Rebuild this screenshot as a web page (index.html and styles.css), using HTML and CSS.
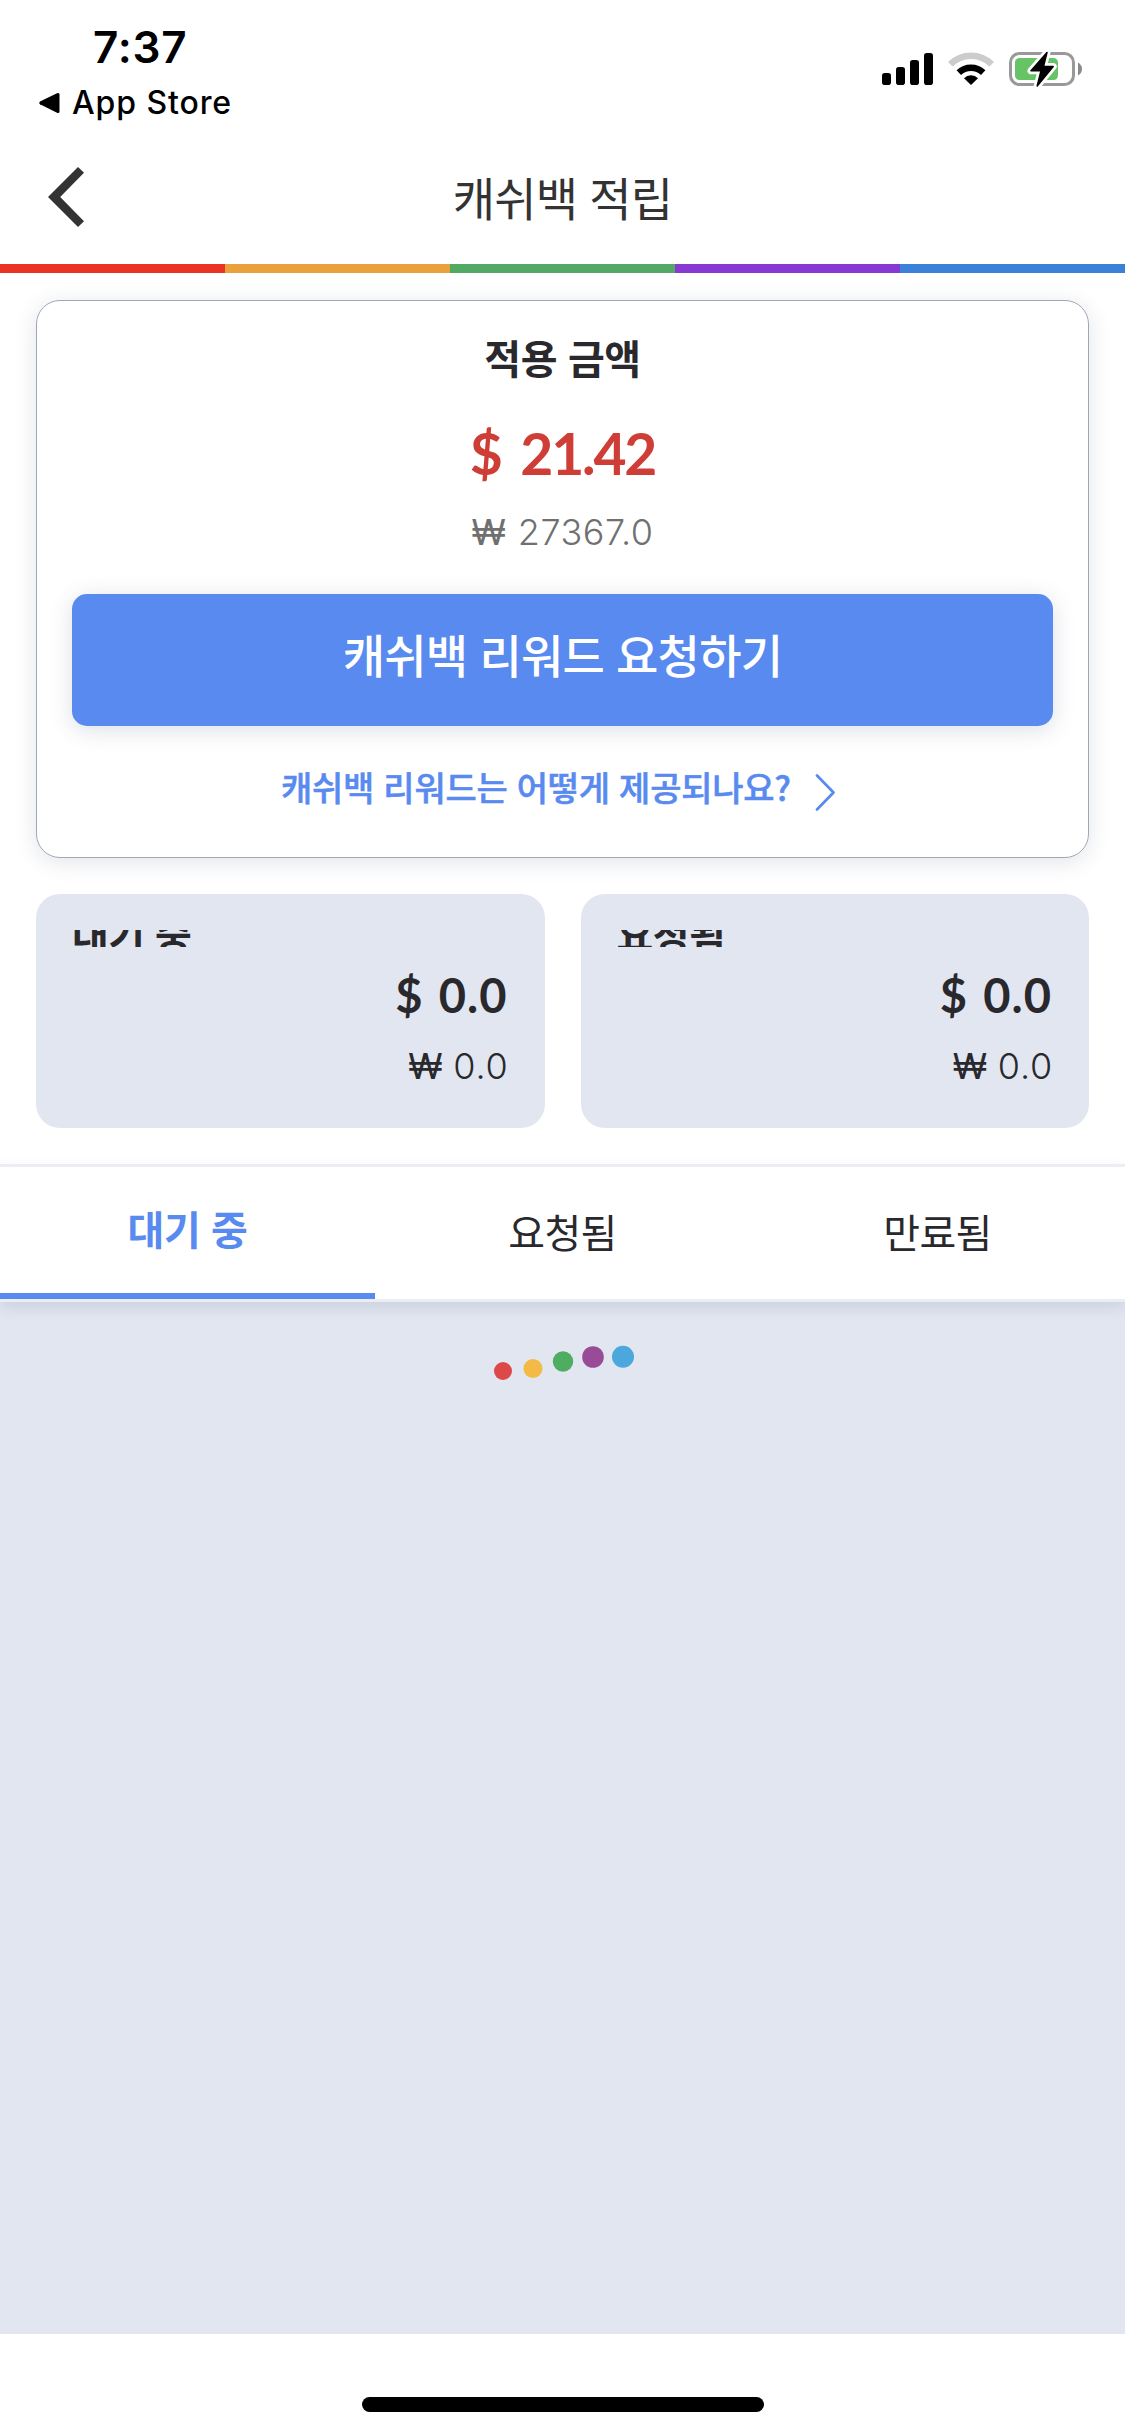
FILE: index.html
```
<!DOCTYPE html>
<html lang="ko">
<head>
<meta charset="utf-8">
<title>캐쉬백 적립</title>
<link rel="stylesheet" href="styles.css">
</head>
<body>
<div class="app">
  <div class="status">
    <div class="status-left">
      <div class="time">7:37</div>
      <div class="return">
        <svg width="21" height="22" viewBox="0 0 21 22"><path d="M1 9.6Q-.4 11 1 12.200L18 20.800Q20.500 21.600 20.500 19.500V2.500Q20.500.300 18 1.200Z"/></svg>
        <span>App Store</span>
      </div>
    </div>
    <svg class="status-icons" width="203" height="40" viewBox="880 50 203 40">
      <rect x="882" y="73" width="9" height="12" rx="2.800"/>
      <rect x="896" y="67" width="9" height="18" rx="2.800"/>
      <rect x="910" y="60" width="9" height="25" rx="2.800"/>
      <rect x="924" y="53" width="9" height="32" rx="2.800"/>
      <path d="M950.300 64.200A29.300 29.300 0 0 1 991.700 64.200" fill="none" stroke="#ccc" stroke-width="6.500"/>
      <path d="M958.800 72.700A17.800 17.800 0 0 1 983.200 72.700" fill="none" stroke="#000" stroke-width="6.500"/>
      <path d="M971 85L964 78.200A10 10 0 0 1 978 78.200Z"/>
      <rect x="1010.500" y="53.500" width="63" height="31" rx="9" fill="none" stroke="#999" stroke-width="3"/>
      <rect x="1015" y="58" width="43" height="22" rx="4.500" fill="#66c466"/>
      <path d="M1078 62.500Q1082 65 1082 69T1078 75.500Z" fill="#8a8a8a"/>
      <path class="bolt" d="M1047 52.500L1031 70.800H1041L1037.200 86L1053.200 66.500H1043.500Z"/>
      <path d="M1047 52.500L1031 70.800H1041L1037.200 86L1053.200 66.500H1043.500Z" stroke="#000" stroke-width="1.500" stroke-linejoin="round"/>
    </svg>
  </div>
  <header class="nav">
    <svg class="back" width="37" height="62" viewBox="0 0 37 62"><path d="M0 31L30 1L36 6.800L12.200 31L36 55.200L30 61Z" fill="#333"/></svg>
    <h1>캐쉬백 적립</h1>
  </header>
  <div class="strip"><i class="red"></i><i class="orange"></i><i class="green"></i><i class="purple"></i><i class="blue"></i></div>

  <section class="card">
    <h2>적용 금액</h2>
    <div class="amount">$ 21.42</div>
    <div class="won"><b>₩</b> 27367.0</div>
    <button class="request">캐쉬백 리워드 요청하기</button>
    <a class="help">
      <span>캐쉬백 리워드는 어떻게 제공되나요?</span>
      <svg width="21" height="37" viewBox="0 0 21 37"><path d="M2 1.500L18.500 18.500L2 35.500" fill="none" stroke="#588af0" stroke-width="2.700" stroke-linecap="round" stroke-linejoin="round"/></svg>
    </a>
  </section>

  <section class="totals">
    <div class="total"><div class="label">대기 중</div><div class="usd">$ 0.0</div><div class="krw"><b>₩</b> 0.0</div></div>
    <div class="total"><div class="label">요청됨</div><div class="usd">$ 0.0</div><div class="krw"><b>₩</b> 0.0</div></div>
  </section>

  <nav class="tabs">
    <div class="tab active">대기 중</div>
    <div class="tab">요청됨</div>
    <div class="tab">만료됨</div>
  </nav>

  <main class="list">
    <svg class="loader" width="142" height="40" viewBox="492 1342 142 40">
      <circle cx="503" cy="1371" r="9" fill="#dd4848"/>
      <circle cx="533" cy="1368.500" r="9.500" fill="#f3bb45"/>
      <circle cx="563" cy="1361.500" r="10.200" fill="#4fad62"/>
      <circle cx="593" cy="1357" r="10.800" fill="#984c97"/>
      <circle cx="623" cy="1356.700" r="11" fill="#4ca7dc"/>
    </svg>
  </main>
  <footer class="home"><div class="home-bar"></div></footer>
</div>
</body>
</html>
```
FILE: styles.css
```
* { box-sizing: border-box; }
body { margin: 0; background: #fff; font-family: "Noto Sans CJK KR", sans-serif; color: #29292d; }
h1, h2 { margin: 0; }
svg { display: block; flex: none; }
.app { width: 1125px; height: 2436px; display: flex; flex-direction: column; overflow: hidden; background: #fff; }
.app > * { flex: none; }

.status { height: 132px; display: flex; justify-content: space-between; padding: 23px 42px 0 39px; color: #000; font-family: Inter, sans-serif; }
.time { font-size: 44px; font-weight: 600; line-height: 48px; letter-spacing: .8px; padding-left: 54px; }
.return { display: flex; align-items: center; gap: 12px; margin-top: 12px; font-size: 32px; font-weight: 500; line-height: 40px; letter-spacing: .9px; }
.status-icons { margin-top: 27px; }
.bolt { fill: #fff; stroke: #fff; stroke-width: 7; stroke-linejoin: round; }

.nav { height: 128px; display: grid; grid-template-columns: 100px 1fr 100px; align-items: center; padding: 0 48px; margin-bottom: 4px; }
.back { margin-top: 2px; }
.nav h1 { font-size: 46px; font-weight: 400; line-height: 60px; letter-spacing: -.8px; text-align: center; color: #333; }
.strip { height: 9px; display: grid; grid-template-columns: repeat(5, 1fr); }
.red { background: #ea3323; }
.orange { background: #eaa13b; }
.green { background: #52a963; }
.purple { background: #8839d1; }
.blue { background: #3c81d8; }

.card { height: 558px; margin: 27px 36px 0; padding: 31px 35px 0; border: 1px solid #a0a6b5; border-radius: 24px; text-align: center; box-shadow: 0 4px 22px rgba(50, 65, 100, .14); }
.card h2 { font-size: 40px; font-weight: 700; line-height: 50px; letter-spacing: -.4px; }
.amount { margin-top: 41px; font: 700 57px/60px Lato, sans-serif; letter-spacing: -2.2px; word-spacing: 8px; color: #cf3e36; }
.won { margin-top: 29px; font: 300 36px/40px Inter, sans-serif; letter-spacing: .5px; word-spacing: 1px; color: #707070; }
.won b, .krw b { font-weight: 400; }
.request { display: flex; align-items: center; justify-content: center; width: 100%; height: 132px; margin-top: 42px; padding: 0 0 14px; border: 0; border-radius: 15px; background: #588af0; color: #fff; font: 500 46px/60px "Noto Sans CJK KR", sans-serif; letter-spacing: -.8px; box-shadow: 0 4px 22px rgba(50, 65, 100, .17); }
.help { display: flex; align-items: center; gap: 24px; margin-top: 36px; padding-left: 209px; font-size: 34px; font-weight: 500; line-height: 50px; letter-spacing: -.25px; color: #588af0; white-space: nowrap; -webkit-text-stroke: .5px #588af0; }
.help svg { margin-top: 11px; }

.totals { display: grid; grid-template-columns: 1fr 1fr; gap: 36px; margin: 36px 36px 0; }
.total { height: 234px; padding: 36px 36px 0; border-radius: 24px; background: #e2e6f1; text-align: right; }
.label { height: 17px; overflow: hidden; font-size: 40px; font-weight: 700; line-height: 7px; letter-spacing: -.6px; text-align: left; }
.usd { margin-top: 20px; padding-right: 1px; font: 700 47px/56px Lato, sans-serif; letter-spacing: 1px; word-spacing: 3px; }
.krw { margin-top: 23px; font: 300 36px/40px Inter, sans-serif; letter-spacing: .8px; word-spacing: -1px; }

.tabs { height: 138px; display: grid; grid-template-columns: repeat(3, 1fr); margin-top: 36px; border: solid #ebedf3; border-width: 3px 0; background: #fff; box-shadow: 0 6px 14px rgba(50, 65, 100, .12); z-index: 1; }
.tab { display: flex; align-items: center; justify-content: center; padding-bottom: 5px; font-size: 40px; line-height: 50px; letter-spacing: -.7px; }
.tab.active { padding-bottom: 5px; border-bottom: 6px solid #588af0; color: #588af0; font-weight: 700; letter-spacing: -.4px; }

.list { flex: 1; display: flex; justify-content: center; align-items: flex-start; padding-top: 40px; background: #e2e6f1; }
.home { height: 102px; display: flex; justify-content: center; padding-top: 63px; }
.home-bar { width: 402px; height: 15px; border-radius: 8px; background: #000; }
```
